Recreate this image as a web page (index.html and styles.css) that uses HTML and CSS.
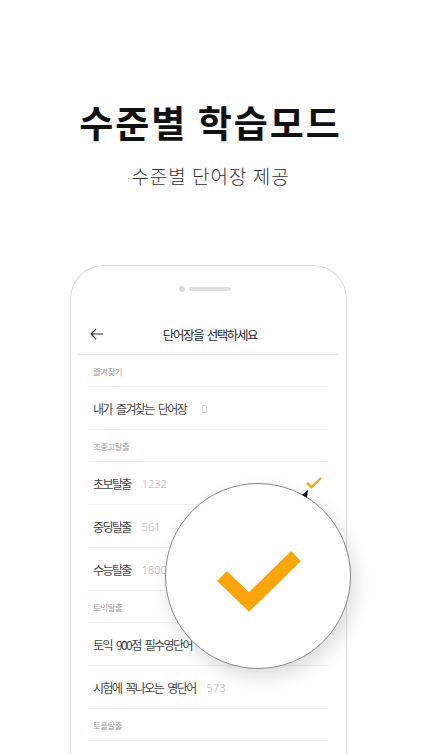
FILE: index.html
```html
<!DOCTYPE html>
<html>
<head>
  <meta charset="utf-8">
  <title>수준별 학습모드</title>
  <link rel="stylesheet" href="styles.css">
</head>
<body>

<!-- 상단 소개 문구 -->
<div class="intro">
  <h1 class="intro-title">수준별 학습모드</h1>
  <p class="intro-sub">수준별 단어장 제공</p>
</div>

<!-- 폰 프레임 -->
<div class="phone">
  <div class="speaker">
    <span class="speaker-dot"></span>
    <span class="speaker-bar"></span>
  </div>

  <div class="screen">
    <div class="topbar">
      <svg class="back" width="14" height="12" viewBox="0 0 14 12">
        <path d="M6 1 L1 6 L6 11 M1 6 H13" fill="none" stroke="#333" stroke-width="1.2"/>
      </svg>
      <span class="topbar-title">단어장을 선택하세요</span>
    </div>

    <ul class="list">
      <li class="section">즐겨찾기</li>
      <li class="item"><span class="name">내가 즐겨찾는 단어장</span><span class="count fav">0</span></li>
      <li class="section">초중고탈출</li>
      <li class="item">
        <span class="name">초보탈출</span><span class="count">1232</span>
        <svg class="tick" width="18" height="14" viewBox="0 0 18 14">
          <path d="M2 7 L6.5 11 L16 2" fill="none" stroke="#f7a51b" stroke-width="2.4"/>
        </svg>
      </li>
      <li class="item"><span class="name">중딩탈출</span><span class="count">561</span></li>
      <li class="item"><span class="name">수능탈출</span><span class="count">1800</span></li>
      <li class="section">토익탈출</li>
      <li class="item"><span class="name">토익 900점 필수영단어</span><span class="count">950</span></li>
      <li class="item"><span class="name">시험에 꼭나오는 영단어</span><span class="count">573</span></li>
      <li class="section">토플탈출</li>
    </ul>
  </div>

  <!-- 확대 돋보기 -->
  <svg class="pointer" width="8" height="8" viewBox="0 0 8 8">
    <polygon points="0,5 6,0 5,8" fill="#111"/>
  </svg>
  <div class="zoom">
    <svg width="184" height="184" viewBox="0 0 184 184">
      <path d="M56 92 L83 118 L130 72" fill="none" stroke="#f9a50b" stroke-width="14"/>
    </svg>
  </div>
</div>

</body>
</html>
```

FILE: styles.css
```css
body {
  margin: 0;
  height: 754px;
  overflow: hidden;
  background-color: #ffffff;
  font-family: "Noto Sans CJK KR", "Noto Sans", sans-serif;
  color: #333;
}

.intro {
  padding-top: 100px;
  text-align: center;
}

.intro-title {
  margin: 0;
  font-size: 37px;
  line-height: 44px;
  font-weight: 700;
  letter-spacing: 2px;
  color: #111;
}

.intro-sub {
  margin: 20px 0 0;
  font-size: 19px;
  line-height: 24px;
  font-weight: 300;
  letter-spacing: 1px;
  color: #333;
}

/* 폰 프레임 */
.phone {
  position: relative;
  margin: 77px 0 0 70px;
  width: 275px;
  height: 520px;
  border: 1px solid #dcdcdc;
  border-bottom: none;
  border-radius: 34px 34px 0 0;
}

.speaker {
  display: flex;
  justify-content: center;
  align-items: center;
  gap: 4px;
  height: 7px;
  padding: 19px 8px 0 0;
}

.speaker-dot {
  width: 6px;
  height: 6px;
  border-radius: 50%;
  background-color: #dadada;
}

.speaker-bar {
  width: 42px;
  height: 4px;
  border-radius: 2px;
  background-color: #e0e0e0;
}

.screen {
  margin: 22px 8px 0 7px;
}

.topbar {
  position: relative;
  height: 40px;
  display: flex;
  align-items: center;
  justify-content: center;
  border-bottom: 1px solid #e4e4e4;
}

.back {
  position: absolute;
  left: 12px;
  top: 14px;
}

.topbar-title {
  font-size: 12.5px;
  letter-spacing: -1.4px;
  word-spacing: 2px;
  color: #222;
  padding-left: 4px;
}

.list {
  list-style: none;
  margin: 0 10px;
  padding: 0;
}

.list li {
  display: flex;
  align-items: center;
  box-sizing: border-box;
  padding-left: 5px;
  border-bottom: 1px solid #f0f0f0;
}

.section {
  height: 32px;
  font-size: 8.5px;
  letter-spacing: -0.6px;
  color: #999;
}

.item {
  height: 43px;
  font-size: 12px;
  color: #444;
}

.name {
  letter-spacing: -1.6px;
  word-spacing: 3px;
}

.count {
  margin-left: 11px;
  font-family: "Noto Sans", sans-serif;
  font-weight: 300;
  font-size: 11px;
  color: #b5b5b5;
}

.count.fav {
  margin-left: 15px;
}

.tick {
  margin-left: auto;
  margin-right: 5px;
}

/* 돋보기 */
.zoom {
  position: absolute;
  left: 94px;
  top: 217px;
  width: 184px;
  height: 184px;
  border: 1px solid #888;
  border-radius: 50%;
  background-color: #fff;
  box-shadow: 4px 8px 18px rgba(0, 0, 0, 0.14);
}

.zoom svg {
  display: block;
}

.pointer {
  position: absolute;
  left: 231px;
  top: 224px;
  z-index: 2;
}
```
